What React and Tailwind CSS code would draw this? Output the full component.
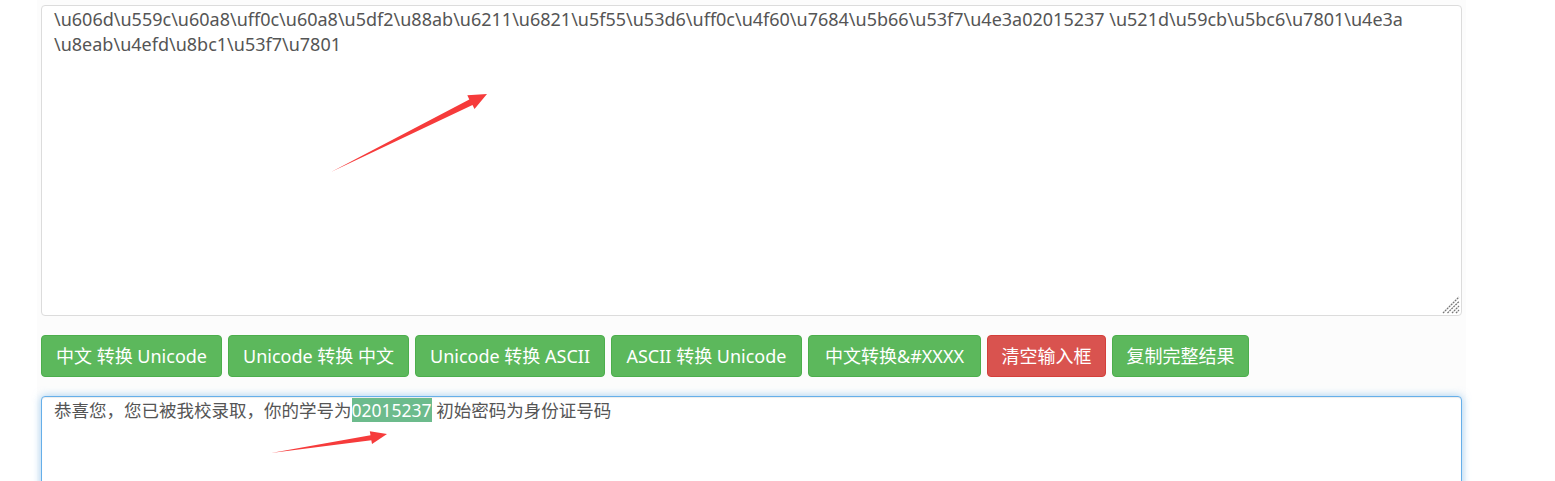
import React from 'react';

const FONT = '"Noto Sans", "Noto Sans CJK SC", sans-serif';

const buttons = [
  { label: '中文 转换 Unicode', w: 'w-[181px]', red: false },
  { label: 'Unicode 转换 中文', w: 'w-[181px]', red: false },
  { label: 'Unicode 转换 ASCII', w: 'w-[190px]', red: false },
  { label: 'ASCII 转换 Unicode', w: 'w-[191px]', red: false },
  { label: '中文转换&#XXXX', w: 'w-[173px]', red: false },
  { label: '清空输入框', w: 'w-[119px]', red: true },
  { label: '复制完整结果', w: 'w-[137px]', red: false },
];

const source =
  '\\u606d\\u559c\\u60a8\\uff0c\\u60a8\\u5df2\\u88ab\\u6211\\u6821\\u5f55\\u53d6\\uff0c\\u4f60\\u7684\\u5b66\\u53f7\\u4e3a02015237 \\u521d\\u59cb\\u5bc6\\u7801\\u4e3a\n\\u8eab\\u4efd\\u8bc1\\u53f7\\u7801';

const Arrows = () => (
  <svg className="absolute left-0 top-0 pointer-events-none" width="1555" height="481">
    {/* top arrow */}
    <polygon
      points="331,172 472.5,105 474.5,109 487,94 467.3,95.3 469.3,99.5"
      fill="#f63b3b"
    />
    {/* bottom arrow */}
    <polygon
      points="271,453 371.3,440.2 372,444 387,434 369.8,431.2 370.5,435.2"
      fill="#f63b3b"
    />
  </svg>
);

const Grip = () => (
  <svg className="absolute right-[2px] bottom-[2px]" width="18" height="18" viewBox="0 0 18 18">
    <g stroke="#777" strokeWidth="1.3" strokeDasharray="2 0.8">
      <line x1="1" y1="17" x2="17" y2="1" />
      <line x1="5.5" y1="17" x2="17" y2="5.5" />
      <line x1="10" y1="17" x2="17" y2="10" />
      <line x1="14" y1="17" x2="17" y2="14" />
    </g>
  </svg>
);

export default function App() {
  return (
    <div className="relative w-[1555px] h-[481px] overflow-hidden bg-white" style={{ fontFamily: FONT }}>
      <div className="ml-[37px] w-[1429px] h-full bg-[#fcfcfc] pl-[4px] pt-[5px]">
        <div className="relative w-[1421px] h-[311px]">
          <textarea
            readOnly
            wrap="off"
            value={source}
            className="block w-full h-full resize-none overflow-hidden rounded border border-[#dcdcdc] bg-white px-[12px] pt-[1px] text-[18px] leading-[25px] text-[#555] outline-none"
            style={{ fontFamily: FONT }}
          />
          <Grip />
        </div>

        <div className="mt-[19px] flex gap-[6px]">
          {buttons.map((b) => (
            <button
              key={b.label}
              className={`${b.w} h-[42px] rounded border text-[18px] text-white ${
                b.red ? 'bg-[#d9534f] border-[#d43f3a]' : 'bg-[#5cb85c] border-[#4cae4c]'
              }`}
            >
              {b.label}
            </button>
          ))}
        </div>

        <div className="mt-[19px] w-[1421px] h-[120px] rounded border border-[#66afe9] bg-white px-[12px] pt-[1px] text-[17.5px] leading-[25px] text-[#555] shadow-[inset_0_1px_1px_rgba(0,0,0,0.075),0_0_8px_rgba(102,175,233,0.6)]">
          恭喜您，您已被我校录取，你的学号为<span className="bg-[#6cbb8c] text-white">02015237</span> 初始密码为身份证号码
        </div>
      </div>
      <Arrows />
    </div>
  );
}
